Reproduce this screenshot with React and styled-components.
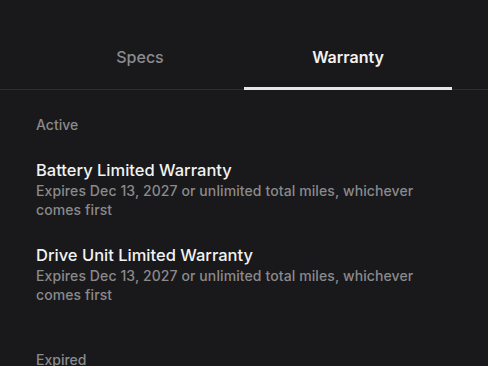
import styled, { createGlobalStyle } from 'styled-components';

const GlobalStyle = createGlobalStyle`
  html, body {
    margin: 0;
    padding: 0;
    background: #19191b;
  }
  body {
    font-family: Inter, 'Noto Sans', sans-serif;
    -webkit-font-smoothing: antialiased;
  }
`;

const Page = styled.div`
  width: 488px;
  height: 366px;
  overflow: hidden;
  background: #19191b;
  color: #ececec;
`;

const TabBar = styled.div`
  display: grid;
  grid-template-columns: 1fr 1fr;
  padding: 0 36px;
  border-bottom: 1px solid #2e2e30;
`;

const Tab = styled.div`
  height: 90px;
  display: flex;
  justify-content: center;
  padding-top: 47px;
  box-sizing: border-box;
  font-size: 16px;
  font-weight: ${(p) => (p.active ? 600 : 500)};
  color: ${(p) => (p.active ? '#f2f2f2' : '#8c8c8e')};
  border-bottom: 3px solid ${(p) => (p.active ? '#e6e6e6' : 'transparent')};
  margin-bottom: -1px;
`;

const Content = styled.div`
  padding: 0 36px;
`;

const SectionLabel = styled.div`
  font-size: 14px;
  font-weight: 500;
  color: #8a8a8c;
  margin-top: ${(p) => p.top}px;
  line-height: 20px;
`;

const Item = styled.div`
  margin-top: ${(p) => p.top}px;
`;

const ItemTitle = styled.div`
  font-size: 16.5px;
  font-weight: 500;
  color: #f2f2f2;
  line-height: 22px;
`;

const ItemSub = styled.div`
  font-size: 14px;
  font-weight: 500;
  letter-spacing: 0.1px;
  color: #8a8a8c;
  line-height: 19px;
  max-width: 400px;
`;

const warranties = [
  { title: 'Battery Limited Warranty', top: 24 },
  { title: 'Drive Unit Limited Warranty', top: 25 },
];

const App = () => {
  return (
    <Page>
      <GlobalStyle />
      <TabBar>
        <Tab>Specs</Tab>
        <Tab active>Warranty</Tab>
      </TabBar>
      <Content>
        <SectionLabel top={25}>Active</SectionLabel>
        {warranties.map((w) => (
          <Item key={w.title} top={w.top}>
            <ItemTitle>{w.title}</ItemTitle>
            <ItemSub>
              Expires Dec 13, 2027 or unlimited total miles, whichever comes
              first
            </ItemSub>
          </Item>
        ))}
        <SectionLabel top={46}>Expired</SectionLabel>
      </Content>
    </Page>
  );
};

export default App;
